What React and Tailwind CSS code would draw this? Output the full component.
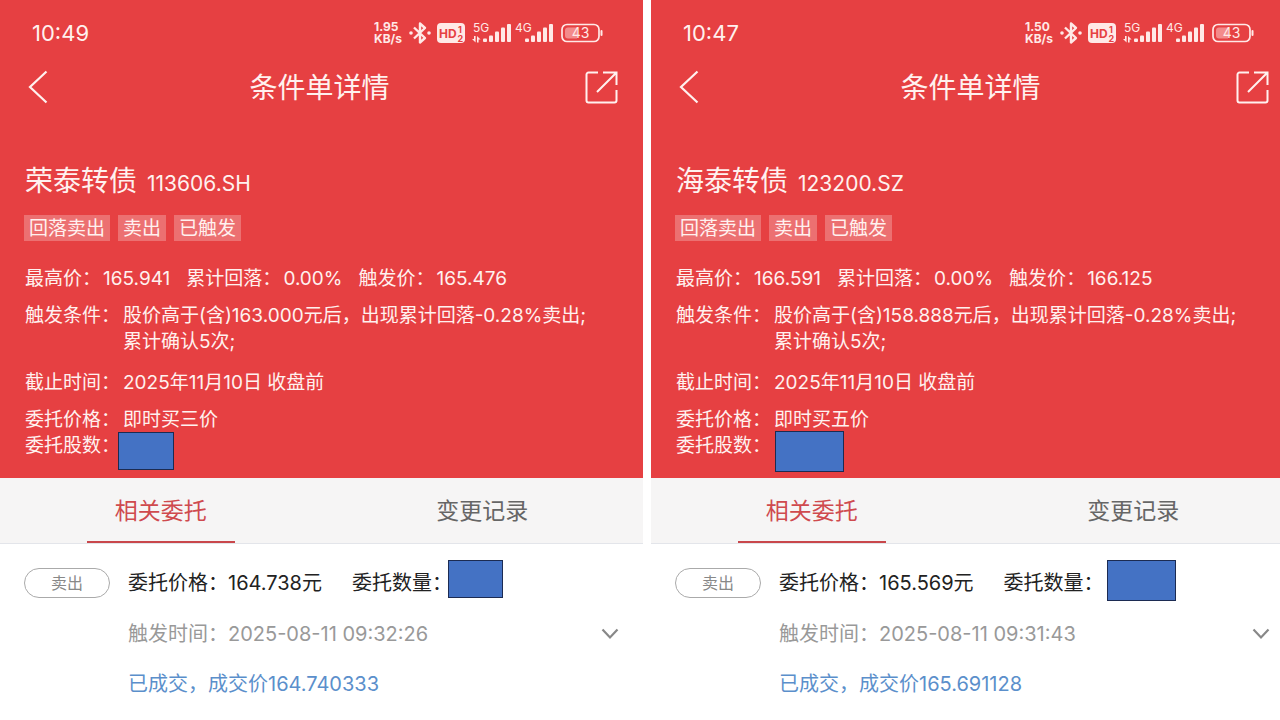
import { useState } from "react";

const ORDERS = [
  {
    id: "sh",
    clock: "10:49",
    speed: "1.95",
    name: "荣泰转债",
    code: "113606.SH",
    highest: "165.941",
    drawdown: "0.00%",
    trigger: "165.476",
    condition: "股价高于(含)163.000元后，出现累计回落-0.28%卖出;",
    confirm: "累计确认5次;",
    deadline: "2025年11月10日 收盘前",
    priceType: "即时买三价",
    sharesMask: "mt-[-1px] ml-[-5px] h-[38px] w-[56px]",
    entrustPrice: "164.738元",
    amountMask: "ml-[-4px] h-[38px] w-[55px]",
    triggeredAt: "2025-08-11 09:32:26",
    result: "已成交，成交价164.740333",
  },
  {
    id: "sz",
    clock: "10:47",
    speed: "1.50",
    name: "海泰转债",
    code: "123200.SZ",
    highest: "166.591",
    drawdown: "0.00%",
    trigger: "166.125",
    condition: "股价高于(含)158.888元后，出现累计回落-0.28%卖出;",
    confirm: "累计确认5次;",
    deadline: "2025年11月10日 收盘前",
    priceType: "即时买五价",
    sharesMask: "mt-[-2px] ml-px h-[41px] w-[69px]",
    entrustPrice: "165.569元",
    amountMask: "ml-[3px] h-[41px] w-[69px]",
    triggeredAt: "2025-08-11 09:31:43",
    result: "已成交，成交价165.691128",
  },
];

const TAGS = ["回落卖出", "卖出", "已触发"];
const TABS = ["相关委托", "变更记录"];

function StatusIcons({ speed }) {
  return (
    <div className="flex items-center text-[#ffe9e7]">
      <div className="w-[35px] text-xs leading-3 font-bold">
        <div>{speed}</div>
        <div>KB/s</div>
      </div>

      <svg width="22" height="24" viewBox="0 0 22 24" fill="none" stroke="currentColor" strokeWidth="2.4" strokeLinejoin="round">
        <path d="M5 6.5 16 17l-5 4.5v-19L16 7 5 17.5" />
        <circle cx="2" cy="12" r="1.8" fill="currentColor" stroke="none" />
        <circle cx="20" cy="12" r="1.8" fill="currentColor" stroke="none" />
      </svg>

      <svg className="ml-[6px]" width="28" height="22" viewBox="0 0 28 22">
        <rect y="1" width="28" height="20" rx="4" fill="currentColor" />
        <g fill="#e64042" fontWeight="700">
          <text x="2" y="15.5" fontSize="12">HD</text>
          <text x="21" y="10.5" fontSize="9">1</text>
          <text x="20.5" y="19.5" fontSize="9">2</text>
        </g>
      </svg>

      <svg className="ml-[6px]" width="84" height="24" viewBox="0 0 84 24" fill="currentColor">
        <text x="2" y="11" fontSize="12">5G</text>
        <path d="M3 15h1.600v6.500L1 18h2zM6 21.500V15l3.600 3.500h-2v3z" />
        <rect x="12" y="17.500" width="4" height="3.500" rx="1" />
        <rect x="18" y="14.500" width="4" height="6.500" rx="1" />
        <rect x="24" y="10.500" width="4" height="10.500" rx="1" />
        <rect x="30" y="6.500" width="4" height="14.500" rx="1" />
        <rect x="36" y="3" width="4" height="18" rx="1" />
        <text x="44" y="11" fontSize="12">4G</text>
        <rect x="54" y="17.500" width="4" height="3.500" rx="1" />
        <rect x="60" y="14.500" width="4" height="6.500" rx="1" />
        <rect x="66" y="10.500" width="4" height="10.500" rx="1" />
        <rect x="72" y="6.500" width="4" height="14.500" rx="1" />
        <rect x="78" y="3" width="4" height="18" rx="1" />
      </svg>

      <svg className="ml-[6px]" width="42" height="20" viewBox="0 0 42 20">
        <rect x="1" y="1.500" width="37" height="17" rx="5" fill="none" stroke="currentColor" strokeWidth="1.700" />
        <path d="M7 4.500h9v11H7a3 3 0 0 1-3-3v-5a3 3 0 0 1 3-3z" fill="#f38b8b" />
        <rect x="39.500" y="7" width="2" height="6" rx="1" fill="currentColor" />
        <text x="19.500" y="15" fontSize="14" textAnchor="middle" fill="currentColor">43</text>
      </svg>
    </div>
  );
}

function Price({ label, value }) {
  return (
    <span className="flex gap-[2px]">
      <span>{label}：</span>
      <span>{value}</span>
    </span>
  );
}

function Field({ label, children }) {
  return (
    <div className="grid grid-cols-[98px_1fr]">
      <dt>{label}：</dt>
      <dd className="whitespace-nowrap">{children}</dd>
    </div>
  );
}

function Mask({ className }) {
  return <div className={`shrink-0 border border-[#1c2b52] bg-[#4472c4] ${className}`} />;
}

function OrderScreen({ order }) {
  const [tab, setTab] = useState(TABS[0]);

  return (
    <section className="min-w-0 bg-white">
      <header className="bg-[#e64042] pb-[19px] text-[#fff1ef]">
        <div className="flex h-[66px] items-center justify-between pr-10 pl-8">
          <time className="text-[22px]">{order.clock}</time>
          <StatusIcons speed={order.speed} />
        </div>

        <nav className="flex h-[42px] items-center justify-between pr-[25px] pl-7">
          <button type="button" aria-label="返回" className="w-[26px]">
            <svg width="20" height="34" viewBox="0 0 20 34" fill="none" stroke="currentColor" strokeWidth="2.200">
              <path d="M18.500 1.500 2 17l16.500 15.500" />
            </svg>
          </button>
          <h1 className="pt-[2px] text-[28px]">条件单详情</h1>
          <button type="button" aria-label="分享">
            <svg width="33" height="33" viewBox="0 0 33 33" fill="none" stroke="currentColor" strokeWidth="2">
              <path d="M13 1.500H3.500a2 2 0 0 0-2 2v26a2 2 0 0 0 2 2h26a2 2 0 0 0 2-2V19M18 1.500h13.500V14M31 2 12 21" />
            </svg>
          </button>
        </nav>

        <div className="mt-[52px] px-6">
          <div className="flex h-10 items-baseline gap-[10px] pl-px">
            <h2 className="text-[28px] leading-[42px]">{order.name}</h2>
            <span className="text-[21px]">{order.code}</span>
          </div>

          <ul className="mt-[15px] flex gap-2 text-[19px] leading-6">
            {TAGS.map((tag) => (
              <li key={tag} className="bg-white/25 px-[5px] pt-[2px]">
                {tag}
              </li>
            ))}
          </ul>

          <div className="mt-[25px] flex gap-4 pl-px text-[19px] leading-[26px] whitespace-nowrap">
            <Price label="最高价" value={order.highest} />
            <Price label="累计回落" value={order.drawdown} />
            <Price label="触发价" value={order.trigger} />
          </div>

          <dl className="mt-[11px] pl-px text-[19px] leading-[26px]">
            <Field label="触发条件">
              {order.condition}
              <br />
              {order.confirm}
            </Field>
            <div className="mt-[15px]">
              <Field label="截止时间">{order.deadline}</Field>
            </div>
            <div className="mt-[11px]">
              <Field label="委托价格">{order.priceType}</Field>
              <div className="flex h-[26px]">
                <Field label="委托股数">
                  <Mask className={order.sharesMask} />
                </Field>
              </div>
            </div>
          </dl>
        </div>
      </header>

      <div role="tablist" className="flex h-[66px] justify-around border-b border-[#e3e5ea] bg-[#f6f5f5]">
        {TABS.map((item) => (
          <button
            key={item}
            type="button"
            role="tab"
            aria-selected={tab === item}
            onClick={() => setTab(item)}
            className="flex flex-1 justify-center text-[23px]"
          >
            <span
              className={
                tab === item
                  ? "flex h-full w-[148px] items-center justify-center border-b-2 border-[#c9474b] pt-1 text-[#cf4a4e]"
                  : "flex h-full w-[148px] items-center justify-center border-b-2 border-transparent pt-1 text-[#666]"
              }
            >
              {item}
            </span>
          </button>
        ))}
      </div>

      <article className="flex items-start gap-[18px] px-6 pt-6 text-xl leading-[30px] whitespace-nowrap">
        <span className="h-[30px] w-[86px] shrink-0 rounded-full border border-[#aaa] text-center text-base leading-7 text-[#888]">
          卖出
        </span>
        <div className="flex flex-1 flex-col gap-5">
          <div className="flex h-[31px] text-[#222]">
            <span>委托价格：{order.entrustPrice}</span>
            <span className="ml-[30px]">委托数量：</span>
            <Mask className={`mt-[-8px] ${order.amountMask}`} />
          </div>
          <div className="flex items-center justify-between text-[#999]">
            <span>触发时间：{order.triggeredAt}</span>
            <button type="button" aria-label="展开">
              <svg width="18" height="12" viewBox="0 0 18 12" fill="none" stroke="#888" strokeWidth="2.200">
                <path d="m1.500 1.500 7.500 8 7.500-8" />
              </svg>
            </button>
          </div>
          <p className="text-[#5b8fcb]">{order.result}</p>
        </div>
      </article>
    </section>
  );
}

export default function App() {
  return (
    <main className="min-h-screen overflow-x-hidden bg-white font-['Inter','Noto_Sans_CJK_SC',sans-serif]">
      {/* the second screen runs slightly past the right edge */}
      <div className="grid w-[calc(100%+14px)] grid-cols-2 gap-2">
        {ORDERS.map((order) => (
          <OrderScreen key={order.id} order={order} />
        ))}
      </div>
    </main>
  );
}
